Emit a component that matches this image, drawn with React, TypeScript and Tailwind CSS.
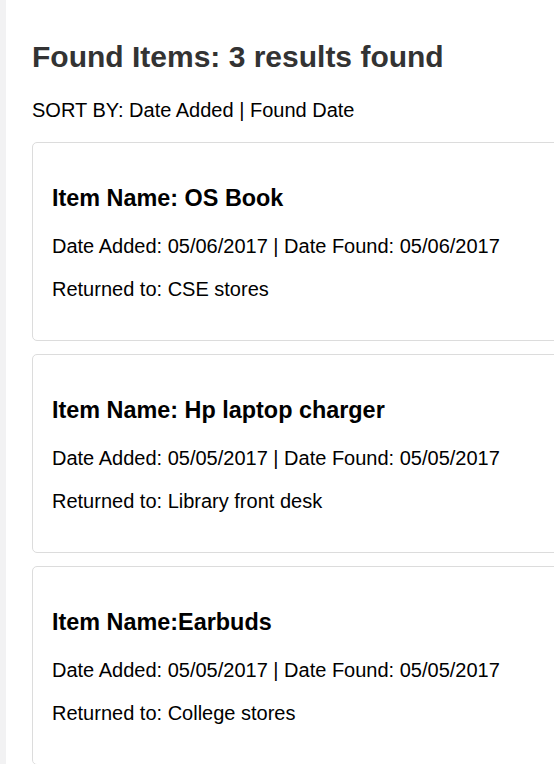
const items = [
  { name: "Item Name: OS Book", added: "05/06/2017", found: "05/06/2017", returned: "CSE stores" },
  { name: "Item Name: Hp laptop charger", added: "05/05/2017", found: "05/05/2017", returned: "Library front desk" },
  { name: "Item Name:Earbuds", added: "05/05/2017", found: "05/05/2017", returned: "College stores" },
];

export default function App() {
  return (
    <div className="flex min-h-[764px] w-[554px] overflow-hidden bg-white font-['Liberation_Sans',Arial,sans-serif]">
      <div className="w-[6px] shrink-0 bg-[#f2f2f3]" />
      <main className="flex-1 pl-[26px] pt-[39px]">
        <h1 className="text-[30px] font-bold leading-[36px] text-[#333]">
          Found Items: 3 results found
        </h1>
        <p className="mt-[23px] text-[20px] leading-[24px] text-black">
          SORT BY: Date Added | Found Date
        </p>

        <div className="mt-[20px] flex w-[540px] flex-col gap-[13px]">
          {items.map((it) => (
            <div
              key={it.name}
              className="rounded-[5px] border border-[#dcdcdc] bg-white pl-[19px] pt-[41px] pb-[39px] text-black"
            >
              <h3 className="text-[23.4px] font-bold leading-[28px]">{it.name}</h3>
              <p className="mt-[22px] text-[20px] leading-[24px]">
                Date Added: {it.added} | Date Found: {it.found}
              </p>
              <p className="mt-[19px] text-[20px] leading-[24px]">Returned to: {it.returned}</p>
            </div>
          ))}
        </div>
      </main>
    </div>
  );
}
